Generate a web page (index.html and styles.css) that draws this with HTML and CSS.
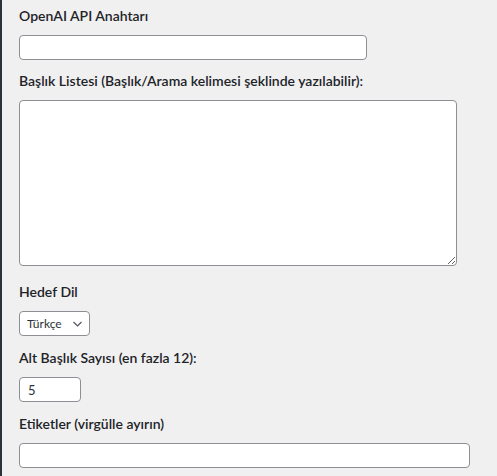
FILE: index.html
```html
<!DOCTYPE html>
<html lang="tr">
<head>
  <meta charset="UTF-8" />
  <meta name="viewport" content="width=device-width, initial-scale=1.0"/>
  <title>Ayarlar</title>
  <link rel="stylesheet" href="styles.css">
</head>
<body>

  <div class="wrap">
    <div class="field field-key">
      <label for="api-key">OpenAI API Anahtarı</label>
      <input type="text" id="api-key" class="input-key" />
    </div>

    <div class="field field-area">
      <label for="titles">Başlık Listesi (Başlık/Arama kelimesi şeklinde yazılabilir):</label>
      <textarea id="titles"></textarea>
    </div>

    <div class="field">
      <label for="lang">Hedef Dil</label>
      <div class="select-box">
        <select id="lang">
          <option>Türkçe</option>
          <option>English</option>
        </select>
        <svg class="chevron" width="9" height="6" viewBox="0 0 9 6">
          <path d="M0.5 1l4 4 4-4" fill="none" stroke="#50575e" stroke-width="1.2"/>
        </svg>
      </div>
    </div>

    <div class="field">
      <label for="count">Alt Başlık Sayısı (en fazla 12):</label>
      <input type="number" id="count" class="input-count" value="5" min="1" max="12" />
    </div>

    <div class="field">
      <label for="tags">Etiketler (virgülle ayırın)</label>
      <input type="text" id="tags" class="input-tags" />
    </div>
  </div>

</body>
</html>
```

FILE: styles.css
```css
body {
  margin: 0;
  background: #f0f0f1;
  font-family: 'Lato', 'Noto Sans', sans-serif;
  color: #1d2327;
}

.wrap {
  border-left: 2px solid #2c3338;
  padding: 6px 0 0 17px;
  min-height: 100vh;
  box-sizing: border-box;
}

.field {
  margin-bottom: 12px;
}

.field-key {
  margin-bottom: 11px;
}

.field-area {
  margin-bottom: 16px;
}

label {
  display: block;
  font-size: 14px;
  font-weight: 600;
  line-height: 20px;
  margin-bottom: 9px;
}

input,
textarea,
select {
  display: block;
  box-sizing: border-box;
  font-family: inherit;
  font-size: 13px;
  color: #2c3338;
  background: #fff;
  border: 1px solid #8c8f94;
  border-radius: 4px;
  padding: 0 8px;
  margin: 0;
}

input {
  height: 25px;
}

.input-key {
  width: 348px;
}

.input-count {
  width: 62px;
}

.input-count::-webkit-inner-spin-button {
  -webkit-appearance: none;
}

.input-tags {
  width: 451px;
}

textarea {
  width: 438px;
  height: 166px;
  resize: both;
}

.select-box {
  position: relative;
  width: 71px;
}

select {
  -webkit-appearance: none;
  appearance: none;
  width: 71px;
  height: 25px;
  padding: 0 20px 0 7px;
  font-size: 12px;
}

.chevron {
  position: absolute;
  right: 8px;
  top: 10px;
  pointer-events: none;
}
```
